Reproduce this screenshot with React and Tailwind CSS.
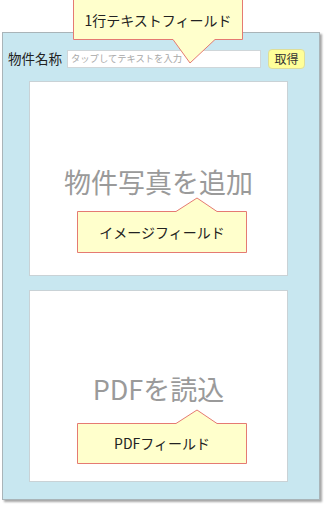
const font = { fontFamily: '"Noto Sans CJK JP", "Noto Sans", sans-serif' };

const Callout = ({ className, width, height, path, textClass, children }) => (
	<div className={`absolute ${className}`} style={{ width, height }}>
		<svg width={width} height={height} className="absolute inset-0">
			<path d={path} fill="#ffffcc" stroke="#e57a72" strokeWidth="1" />
		</svg>
		<div className={`absolute flex items-center justify-center text-[#222] ${textClass}`}>
			{children}
		</div>
	</div>
);

export default function App() {
	return (
		<div className="relative h-[511px] w-[327px] overflow-hidden bg-white" style={font}>
			<div className="pt-[32px] pl-[2px]">
				<div className="flex h-[468px] w-[318px] flex-col border border-[#a9b4b8] bg-[#c8e7f0] shadow-[2px_2px_2px_rgba(0,0,0,0.35)]">
					<div className="mt-[16px] flex h-[20px] items-center pl-[5px]">
						<span className="text-[13.5px] leading-none text-[#222]">物件名称</span>
						<div className="ml-[5px] flex h-[18px] w-[194px] items-center border border-[#cfd6d9] bg-white pl-[3px]">
							<span className="text-[9.3px] leading-none text-[#a8a8a8]">
								タップしてテキストを入力
							</span>
						</div>
						<button
							type="button"
							className="ml-[7px] flex h-[20px] w-[37px] items-center justify-center rounded-[4px] border border-[#dede9a] bg-[#ffff99] text-[12px] leading-none text-[#333]"
						>
							取得
						</button>
					</div>

					<div className="mt-[12px] ml-[26px] flex h-[195px] w-[259px] items-center justify-center border border-[#c9d2d6] bg-white pt-[6px]">
						<span className="text-[27px] leading-none text-[#9a9a9a]">物件写真を追加</span>
					</div>

					<div className="mt-[14px] ml-[26px] flex h-[192px] w-[259px] items-center justify-center border border-[#c9d2d6] bg-white pt-[4px]">
						<span className="text-[27px] leading-none text-[#9a9a9a]">PDFを読込</span>
					</div>
				</div>
			</div>

			<Callout
				className="left-[73px] top-0"
				width={171}
				height={65}
				path="M0.5,-2 L169.5,-2 L169.5,39.5 L142,39.5 L117,63 L100,39.5 L0.5,39.5 Z"
				textClass="left-0 top-0 h-[40px] w-[170px] text-[14px]"
			>
				1行テキストフィールド
			</Callout>

			<Callout
				className="left-[77px] top-[197px]"
				width={171}
				height={57}
				path="M0.5,14.5 L99,14.5 L120,1 L140,14.5 L169.5,14.5 L169.5,55.5 L0.5,55.5 Z"
				textClass="left-0 top-[14px] h-[42px] w-[170px] text-[14px]"
			>
				イメージフィールド
			</Callout>

			<Callout
				className="left-[77px] top-[409px]"
				width={171}
				height={56}
				path="M0.5,14.5 L99,14.5 L120,1 L140,14.5 L169.5,14.5 L169.5,54.5 L0.5,54.5 Z"
				textClass="left-0 top-[14px] h-[41px] w-[170px] text-[14px]"
			>
				PDFフィールド
			</Callout>
		</div>
	);
}
